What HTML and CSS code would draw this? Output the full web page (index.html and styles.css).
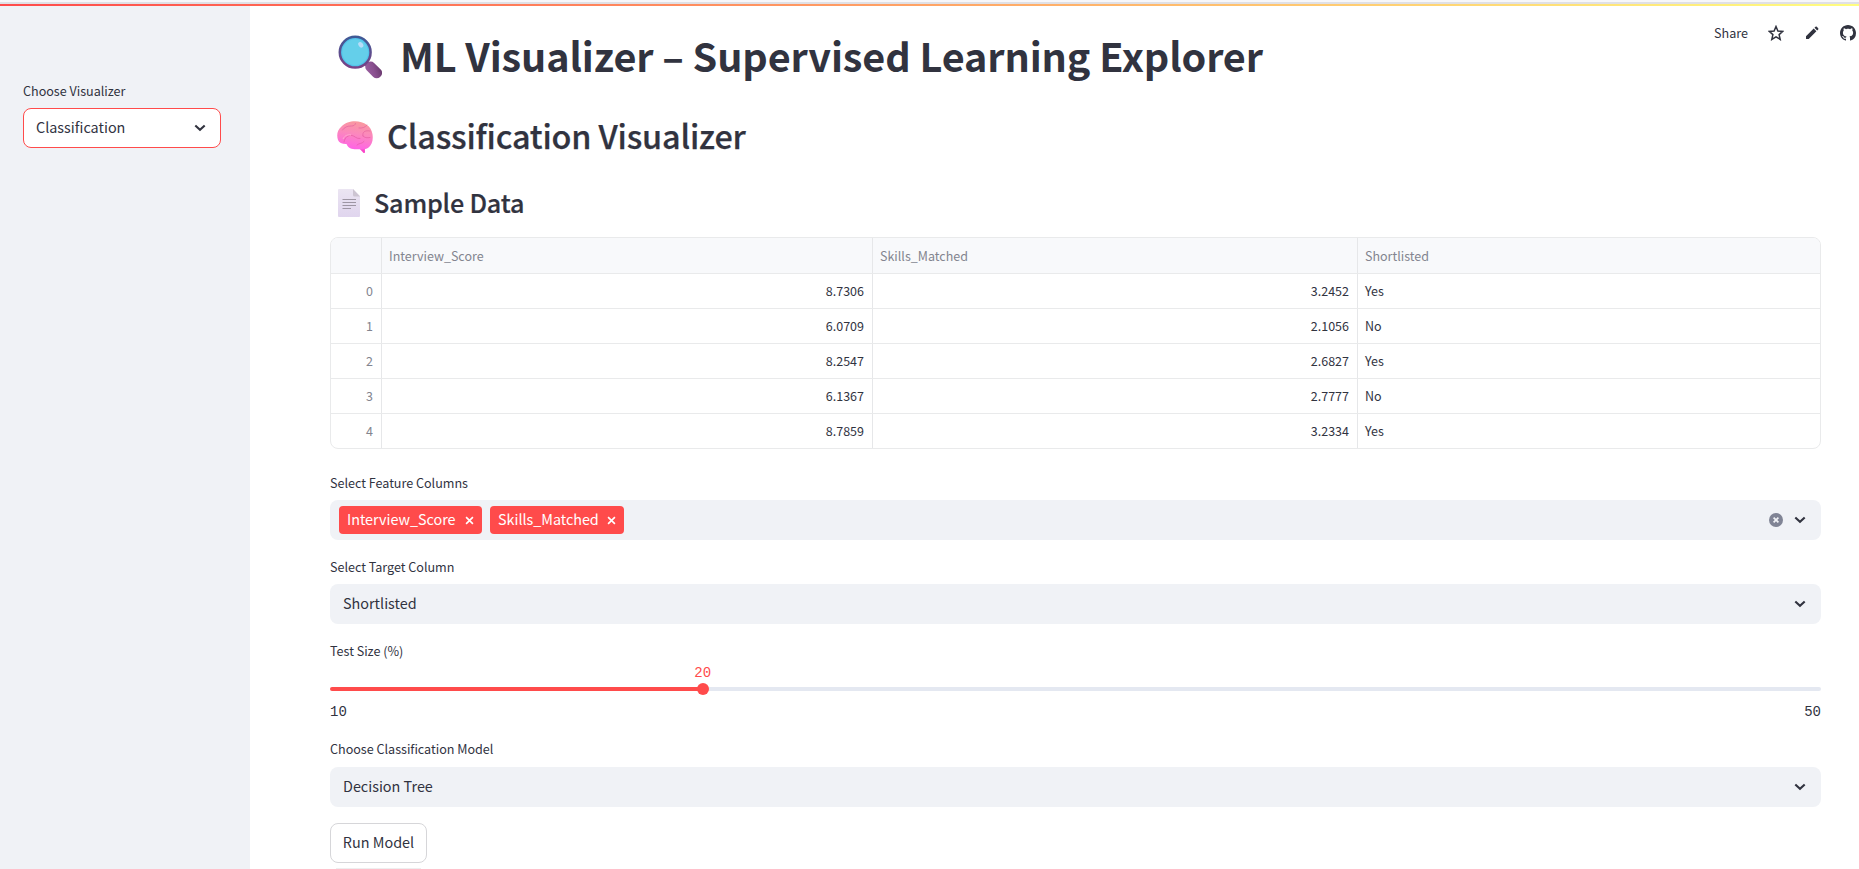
FILE: index.html
```html
<!DOCTYPE html>
<html lang="en">
<head>
<meta charset="utf-8">
<title>ML Visualizer</title>
<link rel="stylesheet" href="styles.css">
</head>
<body>
<svg width="0" height="0" class="defs">
  <defs>
    <symbol id="chevron" viewBox="0 0 12 8"><path d="M1.3 1.4 6 5.8l4.7-4.4" fill="none" stroke="#31333f" stroke-width="2.1"/></symbol>
    <symbol id="cross" viewBox="0 0 10 10"><path d="m1.2 1.2 7.600 7.600m0-7.600L1.200 8.800" fill="none" stroke="#fff" stroke-width="1.8"/></symbol>
  </defs>
</svg>
<div class="topline"></div>
<div class="decoration"></div>
<div class="app">
  <aside class="sidebar">
    <div class="label">Choose Visualizer</div>
    <div class="select focused"><span>Classification</span><svg class="chev"><use href="#chevron"/></svg></div>
  </aside>
  <main class="main">
    <nav class="toolbar">
      <span class="share">Share</span>
      <svg class="tool" viewBox="0 0 16 16"><path d="m8 1.500 1.900 4.450 4.850.45-3.650 3.200 1.100 4.750L8 11.850l-4.200 2.500 1.100-4.750L1.250 6.400l4.850-.45z" fill="none" stroke="#31333f" stroke-width="1.5"/></svg>
      <svg class="tool" viewBox="0 0 16 16"><path d="M2 14v-2.700L9.700 3.600l2.700 2.700L4.700 14zM10.500 2.800l.95-.95a1 1 0 0 1 1.400 0l1.300 1.300a1 1 0 0 1 0 1.400l-.95.95z" fill="#31333f"/></svg>
      <svg class="tool github" viewBox="0 0 16 16"><path fill="#31333f" d="M8 0C3.580 0 0 3.580 0 8c0 3.540 2.290 6.530 5.470 7.590.4.070.55-.17.55-.38 0-.19-.01-.82-.01-1.490-2.010.37-2.530-.49-2.690-.94-.09-.23-.48-.94-.82-1.130-.28-.15-.68-.52-.01-.53.63-.01 1.080.58 1.230.82.72 1.210 1.870.87 2.330.66.070-.52.28-.87.51-1.070-1.780-.2-3.640-.89-3.640-3.950 0-.87.31-1.590.82-2.150-.08-.2-.36-1.020.08-2.120 0 0 .67-.21 2.200.82.64-.18 1.320-.27 2-.27s1.360.09 2 .27c1.530-1.040 2.200-.82 2.200-.82.44 1.100.16 1.920.08 2.120.51.56.82 1.270.82 2.150 0 3.070-1.870 3.750-3.650 3.950.29.25.54.73.54 1.480 0 1.070-.01 1.930-.01 2.200 0 .21.15.46.55.38A8.010 8.010 0 0 0 16 8c0-4.420-3.580-8-8-8"/></svg>
    </nav>
    <h1 class="title">
      <svg class="lens" viewBox="0 0 44 44">
        <defs>
          <linearGradient id="rim" x1="0" y1="0" x2="0" y2="1"><stop offset="0" stop-color="#3f5a96"/><stop offset="1" stop-color="#794286"/></linearGradient>
          <linearGradient id="grip" x1="0" y1="1" x2="1" y2="0"><stop offset="0" stop-color="#9a61a1"/><stop offset=".5" stop-color="#8a5090"/><stop offset="1" stop-color="#653669"/></linearGradient>
          <radialGradient id="glass"><stop offset=".8" stop-color="#64cfea"/><stop offset="1" stop-color="#35afe8"/></radialGradient>
        </defs>
        <path d="m27 27 4 4" stroke="#6b3f7c" stroke-width="5"/>
        <rect x="26" y="30" width="19" height="10.500" rx="4.800" transform="rotate(45 36 35.300)" fill="url(#grip)"/>
        <circle cx="17.200" cy="17.200" r="15.400" fill="url(#glass)" stroke="url(#rim)" stroke-width="2.500"/>
        <ellipse cx="22.800" cy="9.800" rx="2.300" ry="3" transform="rotate(-35 22.800 9.800)" fill="#b9dcf8"/>
      </svg>
      <span>ML Visualizer – Supervised Learning Explorer</span>
    </h1>
    <h2 class="heading">
      <svg class="brain" viewBox="0 0 36 33">
        <defs><linearGradient id="pink" x1=".65" y1="0" x2=".45" y2="1"><stop offset="0" stop-color="#f99a9c"/><stop offset=".45" stop-color="#fb88bd"/><stop offset="1" stop-color="#ff62e7"/></linearGradient></defs>
        <path d="m22 27 4.500 5 1.500-.2-.2-5z" fill="#f945c8"/>
        <path d="M1 19C-.7 14 .5 9 4 6 8 1.500 13 .2 18 .2c9 0 16.500 5 17.500 13 .9 6-.5 11-4.500 13.800-3.500 1.800-7 1.500-10 1.300-5 .4-10-.8-11.500-5.300C5.500 23.200 2 22 1 19z" fill="url(#pink)"/>
        <g fill="none" stroke="#e0589b" stroke-opacity=".65" stroke-width=".9" stroke-linecap="round">
          <path d="M5.500 9c2-3 5-4 9-4 2 0 4-1 4-2.500M7 21c1-5 4-7 8-6.500 3 .5 4 3.500 8 3M22 7c3 .5 6-.5 8-3M26 15c-1-4 2-6 7-5M26 15c2 2 4 2 7 1.500M20 24c2-2 5-1 7-3.500"/>
        </g>
        <path d="M6 18c2-4 5-4.500 8-4" stroke="#ffadce" stroke-width="1" fill="none"/>
      </svg>
      <span>Classification Visualizer</span>
    </h2>
    <h3 class="subheading">
      <svg class="page" viewBox="0 0 22 28">
        <defs><linearGradient id="paper" x1="0" y1="0" x2="0" y2="1"><stop offset="0" stop-color="#ebe5f2"/><stop offset="1" stop-color="#e0d5ee"/></linearGradient></defs>
        <path d="M0 1q0-1 1-1h14l7 7v20q0 1-1 1H1q-1 0-1-1z" fill="url(#paper)"/><path d="M15 0v6q0 1.500 1.500 1.500H22z" fill="#cdc5d2"/>
        <path d="M4.500 10.500H18m-13.500 3H18m-13.500 3H18m-13.500 3H13" stroke="#9d95a3" stroke-width="1" fill="none"/>
      </svg>
      <span>Sample Data</span>
    </h3>
    <div class="grid">
      <div class="row head"><div class="cell"></div><div class="cell">Interview_Score</div><div class="cell">Skills_Matched</div><div class="cell">Shortlisted</div></div>
      <div class="row"><div class="cell idx">0</div><div class="cell num">8.7306</div><div class="cell num">3.2452</div><div class="cell">Yes</div></div>
      <div class="row"><div class="cell idx">1</div><div class="cell num">6.0709</div><div class="cell num">2.1056</div><div class="cell">No</div></div>
      <div class="row"><div class="cell idx">2</div><div class="cell num">8.2547</div><div class="cell num">2.6827</div><div class="cell">Yes</div></div>
      <div class="row"><div class="cell idx">3</div><div class="cell num">6.1367</div><div class="cell num">2.7777</div><div class="cell">No</div></div>
      <div class="row"><div class="cell idx">4</div><div class="cell num">8.7859</div><div class="cell num">3.2334</div><div class="cell">Yes</div></div>
    </div>
    <section class="field">
      <div class="label">Select Feature Columns</div>
      <div class="select multi">
        <span class="tag first"><span>Interview_Score</span><svg class="x"><use href="#cross"/></svg></span>
        <span class="tag second"><span>Skills_Matched</span><svg class="x"><use href="#cross"/></svg></span>
        <svg class="clear" viewBox="0 0 14 14"><circle cx="7" cy="7" r="7" fill="#808495"/><path d="m4.600 4.600 4.800 4.800m0-4.800L4.600 9.400" stroke="#f0f2f6" stroke-width="1.700"/></svg>
        <svg class="chev"><use href="#chevron"/></svg>
      </div>
    </section>
    <section class="field">
      <div class="label">Select Target Column</div>
      <div class="select"><span>Shortlisted</span><svg class="chev"><use href="#chevron"/></svg></div>
    </section>
    <section class="field">
      <div class="label">Test Size (%)</div>
      <div class="slider">
        <div class="track"><div class="thumb"><span class="value">20</span></div></div>
        <div class="range"><span>10</span><span>50</span></div>
      </div>
    </section>
    <section class="field model">
      <div class="label">Choose Classification Model</div>
      <div class="select"><span>Decision Tree</span><svg class="chev"><use href="#chevron"/></svg></div>
    </section>
    <button class="run">Run Model</button>
    <div class="next"></div>
  </main>
</div>
</body>
</html>
```
FILE: styles.css
```css
* { box-sizing: border-box; }
html, body { height: 100%; }
body {
  margin: 0;
  height: 869px;
  overflow: hidden;
  background: #fff;
  color: #31333f;
  font-family: "Noto Sans CJK JP", "Noto Sans CJK SC", "Noto Sans", sans-serif;
  font-size: 14.4px;
}
svg { display: block; flex: none; }
.defs { position: absolute; }
.topline { height: 4px; background: #f7f7fa; border-bottom: 2px solid #e0e0e5; }
.decoration { height: 2px; background: linear-gradient(90deg, #ff4b4b, #fffd80); }
.app { display: flex; height: 863px; }
.sidebar { width: 250px; flex: none; background: #f0f2f6; padding: 74px 29px 0 23px; }
.main { position: relative; flex: 1; padding: 22px 38px 0 80px; }

.label { height: 28px; line-height: 22px; font-size: 12.6px; letter-spacing: -0.02px; white-space: nowrap; }
.select {
  display: flex;
  align-items: center;
  height: 40px;
  border-radius: 8px;
  background: #f0f2f6;
  padding: 0 15px 0 13px;
  line-height: 38px;
}
.select > span:first-child { flex: 1; height: 40px; }
.focused { background: #fff; border: 1px solid #ff4b4b; padding: 0 14px 0 12px; }
.focused > span:first-child { height: 38px; line-height: 36px; }
.chev { width: 12px; height: 8px; }

.toolbar { position: absolute; top: 15px; right: 3px; display: flex; align-items: center; height: 24px; }
.share { font-size: 12.6px; line-height: 20px; margin-right: 20px; }
.tool { width: 16px; height: 16px; margin-right: 20px; }
.github { margin-right: 0; }

h1, h2, h3 { display: flex; margin: 0; white-space: nowrap; }
.title { height: 83px; font-size: 39.6px; font-weight: 700; line-height: 54px; letter-spacing: -0.11px; padding-left: 8px; }
.lens { width: 44px; height: 44px; margin: 7px 18px 0 0; }
.heading { height: 69px; font-size: 32.4px; font-weight: 500; line-height: 48px; letter-spacing: -0.18px; -webkit-text-stroke: 0.25px #31333f; padding-left: 7px; }
.brain { width: 36px; height: 33px; margin: 10px 14px 0 0; }
.subheading { height: 57px; font-size: 25.2px; font-weight: 500; line-height: 44px; letter-spacing: -0.2px; -webkit-text-stroke: 0.2px #31333f; padding-left: 8px; }
.page { width: 22px; height: 28px; margin: 9px 14px 0 0; }

.grid { height: 212px; border: 1px solid #e9eaeb; border-radius: 8px; overflow: hidden; font-size: 12.5px; }
.row { display: grid; grid-template-columns: 51px 491px 485px 1fr; height: 35px; border-bottom: 1px solid #e9eaeb; }
.row:last-child { border-bottom: 0; }
.head { height: 36px; background: #f8f9fb; color: #83858f; }
.cell { height: 34px; border-right: 1px solid #e6e7e9; padding: 0 8px 0 7px; line-height: 33px; }
.cell:last-child { border-right: 0; }
.head .cell { height: 35px; line-height: 35px; }
.idx { color: #83858f; text-align: right; }
.num { text-align: right; }

.field { height: 84px; }
.grid + .field { margin-top: 23px; }
.multi { padding-left: 9px; }
.tag {
  display: flex;
  align-items: center;
  height: 28px;
  border-radius: 4px;
  background: #ff4b4b;
  color: #fff;
  line-height: 26px;
  letter-spacing: -0.03px;
  padding: 0 8px 0 8px;
  margin-right: 8px;
}
.select > .tag:first-child { flex: none; height: 28px; }
.tag span { flex: 1; height: 28px; }
.first { width: 143px; }
.second { width: 134px; }
.x { width: 9px; height: 9px; }
.clear { width: 14px; height: 14px; margin: 0 11px 0 auto; }

.slider { padding-top: 19px; }
.track { position: relative; height: 4px; border-radius: 4px; background: linear-gradient(90deg, #ff4b4b 25%, #e4e8f1 25%); }
.thumb { position: absolute; left: 25%; top: -4px; width: 12px; height: 12px; margin-left: -6px; border-radius: 50%; background: #ff4b4b; }
.value { position: absolute; left: -2.4px; top: -20px; line-height: 20px; color: #ff4b4b; font-family: "Liberation Mono", monospace; font-size: 14px; }
.range { display: flex; justify-content: space-between; margin-top: 11px; line-height: 20px; font-family: "Liberation Mono", monospace; font-size: 14px; }
.model { margin-top: 15px; height: 84px; }
.model .label { line-height: 20px; }
.run {
  display: block;
  width: 97px;
  height: 40px;
  padding: 0 0 2px;
  border: 1px solid #d6d6d9;
  border-radius: 8px;
  background: #fff;
  color: inherit;
  font: inherit;
  line-height: 36px;
}
.next { width: 85px; height: 1px; margin: 5px 0 0 6px; background: #eeeeef; }
```
